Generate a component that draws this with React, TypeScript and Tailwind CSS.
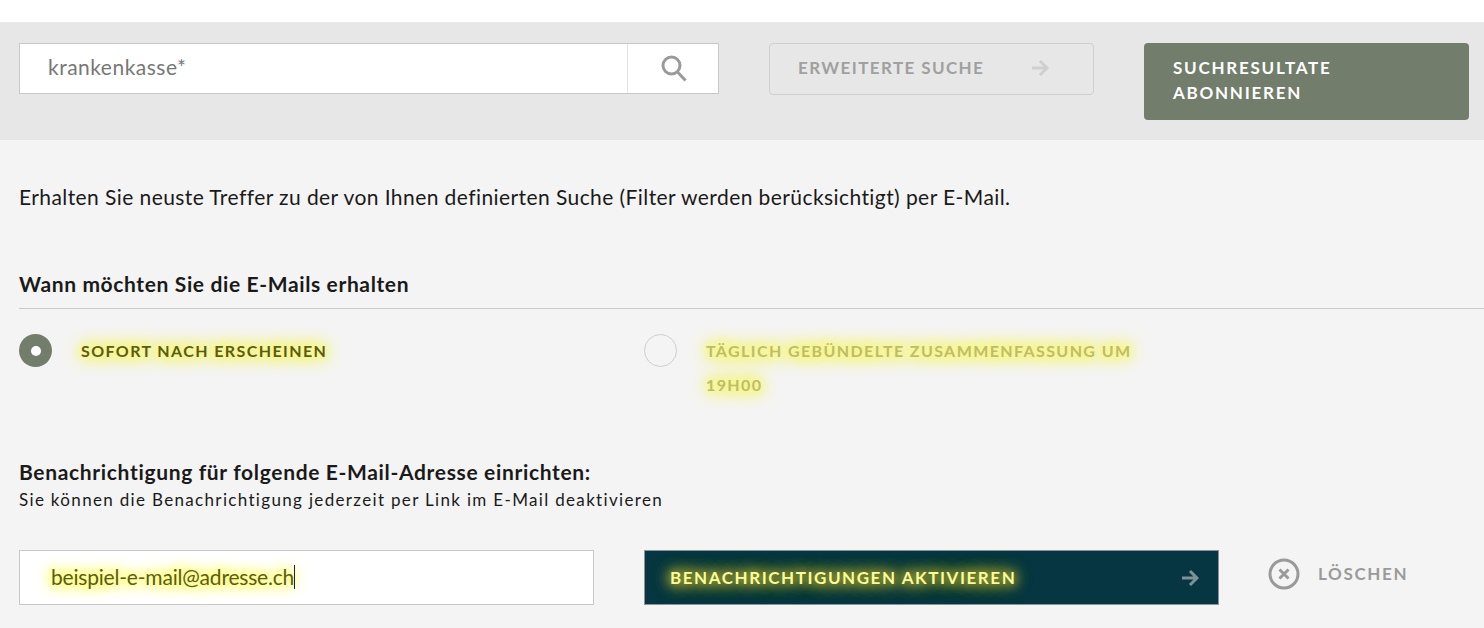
import React from 'react';

const ArrowIcon: React.FC<{ className?: string }> = ({ className }) => (
  <svg viewBox="0 0 18 18" fill="none" stroke="currentColor" strokeWidth="3" className={className}>
    <path d="M1 9h15M9 2l7 7-7 7" />
  </svg>
);

const App: React.FC = () => {
  return (
    <div className="h-[628px] overflow-hidden bg-[#f4f4f4] font-['Lato',sans-serif] text-[#1a1a1a]">
      <div className="h-[22px] bg-white" />

      {/* Search bar */}
      <div className="flex h-[118px] items-start border-t border-[#eaeaea] bg-[#e7e7e7] pl-[19px] pt-[20px]">
        <div className="flex h-[51px] w-[700px] border border-[#c8c8c8] bg-white">
          <div className="flex flex-1 items-center pb-[3px] pl-[28px] text-[21px] tracking-[0.5px] text-[#777]">krankenkasse*</div>
          <div className="flex w-[91px] items-center justify-center border-l border-[#e4e4e4] pb-[1px] pl-[2px]">
            <svg viewBox="0 0 28 28" fill="none" stroke="#9a9a9a" strokeWidth="3" className="h-[28px] w-[28px]">
              <circle cx="11.5" cy="11.5" r="8.5" />
              <path d="M17.5 18l8 8.5" />
            </svg>
          </div>
        </div>
        <div className="ml-[50px] flex h-[52px] w-[325px] items-center rounded-[4px] border border-[#cfcfcf] pb-[2px] pl-[28px] text-[17px] font-bold tracking-[1.4px] text-[#a0a0a0]">
          ERWEITERTE SUCHE
          <ArrowIcon className="ml-[47px] h-[18px] w-[18px] text-[#cfcfcf]" />
        </div>
        <div className="ml-[50px] h-[77px] w-[325px] rounded-[4px] bg-[#737d6b] pl-[29px] pt-[12px] text-[17px] font-bold leading-[25px] tracking-[1.75px] text-white">
          SUCHRESULTATE
          <br />
          ABONNIEREN
        </div>
      </div>

      <main className="pl-[19px]">
        <p className="mt-[43px] text-[21px] leading-[28px] tracking-[0.42px]">
          Erhalten Sie neuste Treffer zu der von Ihnen definierten Suche (Filter werden berücksichtigt) per E-Mail.
        </p>

        <h2 className="mt-[59px] border-b border-[#c9c9c9] pb-[10px] text-[21px] font-bold leading-[28px] tracking-[0.63px]">
          Wann möchten Sie die E-Mails erhalten
        </h2>

        {/* Frequency */}
        <div className="mt-[25px] flex h-[109px] items-start">
          <div className="flex w-[625px] items-start">
            <div className="flex h-[33px] w-[33px] items-center justify-center rounded-full bg-[#737d6b]">
              <div className="h-[10px] w-[10px] rounded-full bg-white" />
            </div>
            <span className="ml-[29px] text-[16px] font-bold leading-[34px] tracking-[1.4px] text-[#5c5c14] [text-shadow:0_0_6px_#f7f77e,0_0_10px_#f7f77e,0_0_14px_#f7f77e,0_0_18px_#f7f77e,0_0_18px_#f7f77e,0_0_18px_#f7f77e]">
              SOFORT NACH ERSCHEINEN
            </span>
          </div>
          <div className="flex items-start">
            <div className="h-[33px] w-[33px] rounded-full border border-[#cfcfcf]" />
            <span className="ml-[29px] w-[440px] text-[16px] font-bold leading-[34px] tracking-[1.4px] text-[#bdbd6a] [text-shadow:0_0_6px_#f7f77e,0_0_10px_#f7f77e,0_0_14px_#f7f77e,0_0_18px_#f7f77e,0_0_18px_#f7f77e,0_0_18px_#f7f77e]">
              TÄGLICH GEBÜNDELTE ZUSAMMENFASSUNG UM 19H00
            </span>
          </div>
        </div>

        <h2 className="mt-[15px] text-[21px] font-bold leading-[28px] tracking-[0.66px]">
          Benachrichtigung für folgende E-Mail-Adresse einrichten:
        </h2>
        <p className="mt-[1px] text-[17px] leading-[26px] tracking-[1.33px]">
          Sie können die Benachrichtigung jederzeit per Link im E-Mail deaktivieren
        </p>

        {/* E-Mail form */}
        <div className="mt-[37px] flex items-start">
          <div className="flex h-[55px] w-[575px] items-center border border-[#c8c8c8] bg-white pb-[2px] pl-[31px] text-[21px] tracking-[-0.2px] text-[#5c5c14]">
            <span className="[text-shadow:0_0_6px_#fbfb80,0_0_10px_#fbfb80,0_0_14px_#fbfb80,0_0_18px_#fbfb80,0_0_18px_#fbfb80,0_0_18px_#fbfb80]">beispiel-e-mail@adresse.ch</span>
            <span className="h-[24px] w-px bg-[#222]" />
          </div>
          <div className="ml-[50px] flex h-[55px] w-[575px] items-center justify-between border border-[#8a9496] bg-[#053641] pl-[25px] pr-[19px] text-[17px] font-bold tracking-[1.55px] text-[#fbfb9c] [text-shadow:0_0_8px_#9a9c30,0_0_12px_#9a9c30,0_0_16px_#9a9c30,0_0_18px_#9a9c30,0_0_18px_#9a9c30]">
            BENACHRICHTIGUNGEN AKTIVIEREN
            <ArrowIcon className="h-[18px] w-[18px] text-[#7d9296]" />
          </div>
          <div className="ml-[49px] flex h-[47px] items-center text-[17px] font-bold tracking-[1.65px] text-[#9a9a9a]">
            <svg viewBox="0 0 32 32" fill="none" stroke="#9a9a9a" className="h-[32px] w-[32px]">
              <circle cx="16" cy="16" r="14" strokeWidth="3" />
              <path d="M11.5 11.5l9 9M20.5 11.5l-9 9" strokeWidth="3" />
            </svg>
            <span className="ml-[18px]">LÖSCHEN</span>
          </div>
        </div>
      </main>
    </div>
  );
};

export default App;
